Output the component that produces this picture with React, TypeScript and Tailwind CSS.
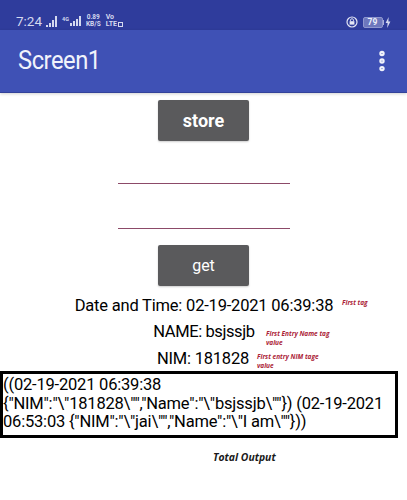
import { EllipsisVertical } from "lucide-react";

const ROBOTO = "font-['Roboto',sans-serif]";
const NOTE = "absolute font-['Open_Sans',sans-serif] text-[6.5px] leading-[9px] font-bold italic text-[#ab2236]";

function Bars({ small }: { small?: boolean }) {
  const heights = small ? [3, 5, 7, 10] : [2, 4, 7, 11];
  return (
    <span className="flex items-end gap-[1px]">
      {heights.map((h) => (
        <span key={h} className="w-[2px] bg-[#d5d9ef]" style={{ height: h }} />
      ))}
    </span>
  );
}

function StatusBar() {
  return (
    <div className="h-[30px] bg-[#2f3c9c] flex items-end pb-[2px] pl-4 pr-[16px] justify-between text-[#d5d9ef]">
      <div className="flex items-center gap-[4px] font-['Roboto',sans-serif]">
        <span className="text-[13.5px] leading-[14px]">7:24</span>
        <Bars />
        <span className="flex items-end gap-[1px] ml-[1px]">
          <span className="text-[5.5px] leading-[6px] font-bold self-start">4G</span>
          <Bars small />
        </span>
        <span className="text-[6.5px] leading-[7px] font-bold text-center ml-[1px]">
          0.89
          <br />
          KB/S
        </span>
        <span className="text-[7px] leading-[7px] font-bold ml-[1px] flex flex-col">
          <span>Vo</span>
          <span className="flex items-center gap-[1px]">
            LTE
            <span className="w-[5px] h-[5px] border border-[#d5d9ef]" />
          </span>
        </span>
      </div>
      <div className="flex items-center gap-[5px]">
        <svg width="12" height="12" viewBox="0 0 12 12" fill="none">
          <circle cx="6" cy="6" r="5" stroke="#e4e6f5" strokeWidth="1.2" />
          <rect x="3.6" y="5.2" width="4.8" height="3.4" fill="#e4e6f5" />
          <path d="M4.5 5.2V4.2a1.5 1.5 0 0 1 3 0v1" stroke="#e4e6f5" strokeWidth="0.9" />
        </svg>
        <span className="flex items-center">
          <span className="w-[20px] h-[11px] rounded-[2px] border border-[#8f97cf] bg-[#6d77bd] text-[8.5px] leading-[9px] font-bold text-center text-[#eef0fa] font-['Roboto',sans-serif]">
            79
          </span>
          <span className="w-[1.5px] h-[5px] bg-[#aab0dc]" />
          <svg width="6" height="11" viewBox="0 0 6 11" className="ml-[1px]">
            <path d="M3.6 0 .6 6h2L2.2 11 5.4 4.6h-2z" fill="#d5d9ef" />
          </svg>
        </span>
      </div>
    </div>
  );
}

function AppBar() {
  return (
    <div className="h-[63px] bg-[#3f51b5] border-b border-[#33429a] flex items-center justify-between pl-[18px] pr-[12px] shadow-[0_1px_3px_rgba(0,0,0,0.18)]">
      <span className={`${ROBOTO} text-[25px] tracking-[-0.5px] scale-x-95 origin-left text-[#f1f3fb]`}>Screen1</span>
      <EllipsisVertical size={26} strokeWidth={3} className="text-[#f1f3fb]" />
    </div>
  );
}

function GreyButton({ label, bold }: { label: string; bold?: boolean }) {
  return (
    <div
      className={`${ROBOTO} w-[91px] h-[41px] rounded-[2px] bg-[#5a5a5c] shadow-[0_1px_2px_rgba(0,0,0,0.2)] flex items-center justify-center text-white ${
        bold ? "text-[18px] font-bold" : "text-[16px]"
      }`}
    >
      {label}
    </div>
  );
}

export default function App() {
  return (
    <div className={`${ROBOTO} relative w-[407px] h-[500px] bg-white overflow-hidden text-black`}>
      <StatusBar />
      <AppBar />

      <div className="flex flex-col items-center pt-[7px]">
        <GreyButton label="store" bold />
        <div className="w-[172px] h-[1px] bg-[#8c4a68] mt-[42px]" />
        <div className="w-[172px] h-[1px] bg-[#8c4a68] mt-[44px]" />
        <div className="mt-[16px]">
          <GreyButton label="get" />
        </div>
      </div>

      <div className="flex flex-col items-center mt-[8px] text-[16.5px] leading-[22px] tracking-[-0.2px]">
        <span className="mt-[1px] ml-[1px]">Date and Time: 02-19-2021 06:39:38</span>
        <span className="mt-[4px] ml-[1px] tracking-[-0.4px]">NAME: bsjssjb</span>
        <span className="mt-[5px] ml-[-1px]">NIM: 181828</span>
      </div>

      <span className={`${NOTE} left-[342px] top-[298px]`}>First tag</span>
      <span className={`${NOTE} left-[266px] top-[329px] w-[75px]`}>First Entry Name tag value</span>
      <span className={`${NOTE} left-[257px] top-[352px] w-[70px]`}>First entry NIM tage value</span>

      <div className="mt-[1px] w-[398px] h-[67px] border-[3px] border-black pt-[2px] text-[16.5px] leading-[18.7px] tracking-[-0.2px] whitespace-nowrap">
        ((02-19-2021 06:39:38
        <br />
        {'{"NIM":"\\"181828\\"","Name":"\\"bsjssjb\\""}) (02-19-2021'}
        <br />
        {'06:53:03 {"NIM":"\\"jai\\"","Name":"\\"I am\\""}))'}
      </div>

      <div className="mt-[13px] pl-[213px] font-['Open_Sans',sans-serif] text-[10.4px] leading-[13px] font-bold italic text-[#1a1a1a]">
        Total Output
      </div>
    </div>
  );
}
